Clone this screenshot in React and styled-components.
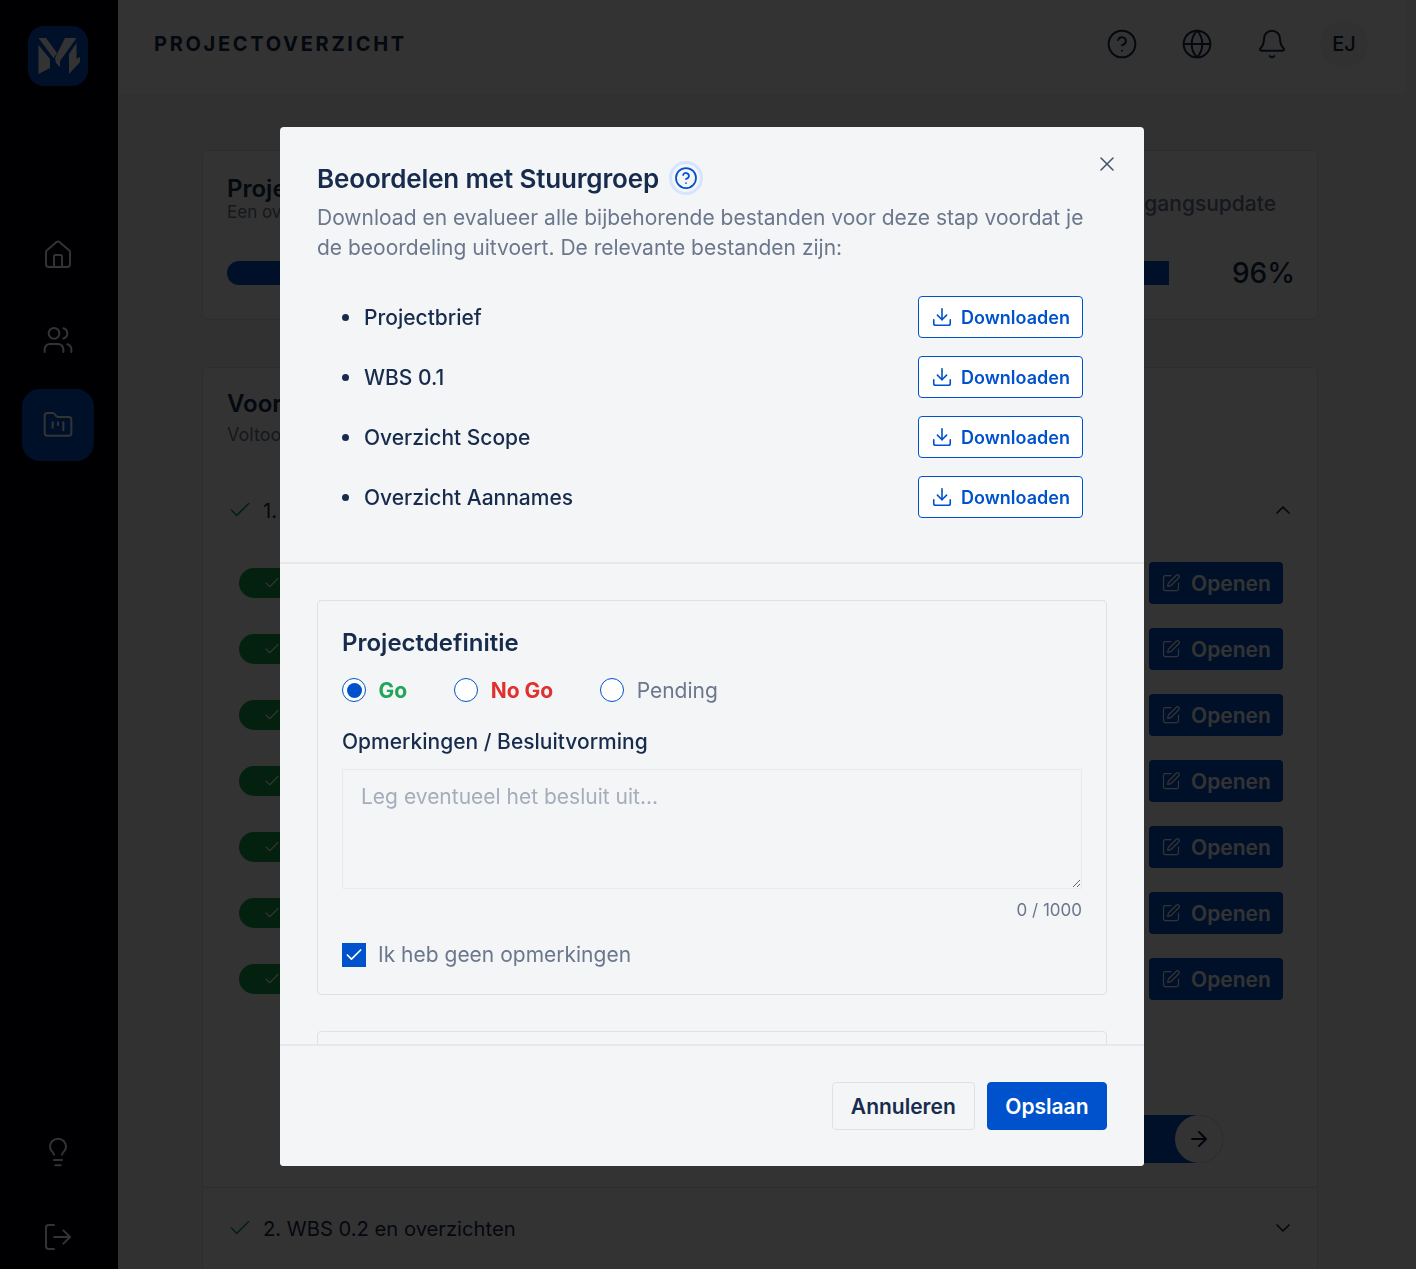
import React from 'react';
import styled, { createGlobalStyle } from 'styled-components';
import {
  ArrowRight,
  Bell,
  Check,
  ChevronDown,
  ChevronUp,
  CircleHelp,
  Download,
  FolderKanban,
  Globe,
  House,
  Lightbulb,
  LogOut,
  SquarePen,
  Users,
  X,
} from 'lucide-react';

const GlobalStyle = createGlobalStyle`
  * { box-sizing: border-box; }
  html, body { margin: 0; height: 100%; overflow: hidden; }
  body {
    font-family: Inter, "Noto Sans", sans-serif;
    color: #172b4d;
    background: #f4f5f7;
  }
`;

const Page = styled.div`
  display: flex;
  height: 100vh;
  overflow: hidden;
`;

const Sidebar = styled.aside`
  flex: 0 0 118px;
  display: flex;
  flex-direction: column;
  align-items: center;
  padding: 26px 2px 0 0;
  background: #02020c;
  color: #fff;
`;

const LogoBox = styled.div`
  width: 60px;
  height: 60px;
  border-radius: 16px;
  background: #0052cc;
  margin-bottom: 133px;
  svg { display: block; }
`;

const NavItem = styled.div`
  width: 72px;
  height: 72px;
  flex-shrink: 0;
  display: flex;
  align-items: center;
  justify-content: center;
  border-radius: 18px;
  margin-bottom: ${(p) => p.$gap || 13}px;
  background: ${(p) => (p.$active ? '#0052cc' : 'transparent')};
`;

const Spacer = styled.div`
  flex: 1;
`;

const Main = styled.main`
  flex: 1;
  min-width: 0;
  display: flex;
  flex-direction: column;
`;

const TopBar = styled.header`
  height: 94px;
  margin-right: 10px;
  padding: 0 36px 6px;
  display: flex;
  align-items: center;
  background: #fff;
  border-radius: 0 0 6px 0;
  flex-shrink: 0;
`;

const PageTitle = styled.h1`
  margin: 0;
  flex: 1;
  font-size: 20px;
  font-weight: 700;
  letter-spacing: 2.7px;
  color: #172b4d;
`;

const TopIcons = styled.div`
  display: flex;
  align-items: center;
  gap: 43px;
  color: #172b4d;
  svg { display: block; }
`;

const Avatar = styled.div`
  width: 48px;
  height: 48px;
  margin-left: -11px;
  margin-right: 2px;
  border-radius: 50%;
  background: #f4f5f7;
  display: flex;
  align-items: center;
  justify-content: center;
  font-size: 20px;
  font-weight: 500;
`;

const Content = styled.div`
  padding: 56px 98px 0 85px;
  display: flex;
  flex-direction: column;
`;

const Card = styled.section`
  background: #fff;
  border: 1px solid #dfe1e6;
  border-radius: 6px;
`;

const ProgressCard = styled(Card)`
  height: 170px;
  margin-left: -1px;
  padding: 24px 22px 24px 24px;
  margin-bottom: 47px;
`;

const CardHead = styled.div`
  display: flex;
  justify-content: space-between;
  align-items: flex-start;
  height: 81px;
`;

const CardTitle = styled.h2`
  margin: 0;
  font-size: 24px;
  line-height: 28px;
  font-weight: 600;
`;

const CardSub = styled.p`
  margin: 0;
  font-size: 17px;
  line-height: 18px;
  color: #6b778c;
`;

const UpdateLink = styled.span`
  margin-top: 16px;
  margin-right: 19px;
  font-size: 21px;
  font-weight: 500;
  color: #6b778c;
`;

const ProgressRow = styled.div`
  display: flex;
  align-items: center;
  justify-content: space-between;
`;

const Track = styled.div`
  width: 942px;
  height: 24px;
  border-radius: 12px 0 0 12px;
  background: #0052cc;
`;

const Percent = styled.span`
  font-size: 28px;
  font-weight: 500;
`;

const StepsCard = styled(Card)`
  margin-left: -1px;
  padding: 22px 0 80px;
`;

const StepsHead = styled.div`
  padding: 0 24px 51px;
`;

const StepsSub = styled(CardSub)`
  margin-top: 6px;
  font-size: 18px;
  line-height: 22px;
`;

const AccordionRow = styled.div`
  display: flex;
  align-items: center;
  gap: 10px;
  padding: 0 22px 0 24px;
  font-size: 20.2px;
  color: #172b4d;
  span { flex: 1; }
  svg { flex-shrink: 0; }
`;

const TaskList = styled.div`
  display: flex;
  flex-direction: column;
  gap: 24px;
  padding: 39px 34px 0 36px;
`;

const TaskRow = styled.div`
  display: flex;
  align-items: center;
  justify-content: space-between;
  height: 42px;
`;

const StatusPill = styled.div`
  width: 120px;
  height: 30px;
  padding-left: 24px;
  display: flex;
  align-items: center;
  border-radius: 15px;
  background: #16a34a;
  color: #fff;
`;

const OpenButton = styled.div`
  width: 134px;
  height: 42px;
  display: flex;
  align-items: center;
  justify-content: center;
  gap: 10px;
  border-radius: 4px;
  background: #0052cc;
  color: #fff;
  font-size: 21px;
  font-weight: 600;
`;

const NextRow = styled.div`
  display: flex;
  justify-content: flex-end;
  padding: 115px 94px 24px 0;
  border-bottom: 1px solid #dfe1e6;
`;

const NextBar = styled.div`
  width: 640px;
  height: 48px;
  display: flex;
  justify-content: flex-end;
  border-radius: 24px;
  background: #0052cc;
`;

const NextCircle = styled.div`
  width: 48px;
  height: 48px;
  border-radius: 50%;
  background: #fff;
  display: flex;
  align-items: center;
  justify-content: center;
  color: #091e42;
`;

const ClosedRow = styled(AccordionRow)`
  padding-top: 27px;
`;

const Overlay = styled.div`
  position: fixed;
  inset: 0;
  padding: 127px 0 0 280px;
  background: rgba(0, 0, 0, 0.8);
`;

const Modal = styled.div`
  position: relative;
  width: 864px;
  height: 1039px;
  display: flex;
  flex-direction: column;
  border-radius: 4px;
  background: #f4f5f7;
  overflow: hidden;
`;

const CloseButton = styled.div`
  position: absolute;
  top: 25px;
  right: 25px;
  color: #42526e;
  svg { display: block; }
`;

const ModalHead = styled.div`
  flex-shrink: 0;
  height: 437px;
  padding: 34px 61px 0 37px;
  border-bottom: 2px solid #e6e8ec;
`;

const TitleRow = styled.div`
  display: flex;
  align-items: center;
  gap: 10px;
  height: 34px;
`;

const ModalTitle = styled.h2`
  margin: 0;
  font-size: 26px;
  font-weight: 600;
  letter-spacing: -0.15px;
  color: #172b4d;
`;

const HelpBadge = styled.div`
  width: 34px;
  height: 34px;
  display: flex;
  align-items: center;
  justify-content: center;
  border-radius: 50%;
  background: #f4f5f7;
  border: 3px solid #d6e4ff;
  color: #0052cc;
  svg { display: block; }
`;

const Description = styled.p`
  margin: 8px -6px 0 0;
  font-size: 21px;
  line-height: 30px;
  color: #6b778c;
`;

const FileList = styled.ul`
  margin: 33px 0 0;
  padding: 0;
  list-style: none;
  display: flex;
  flex-direction: column;
  gap: 18px;
`;

const FileItem = styled.li`
  display: flex;
  align-items: center;
  justify-content: space-between;
  height: 42px;
  padding-left: 25px;
  font-size: 21px;
  font-weight: 500;
`;

const FileName = styled.span`
  display: flex;
  align-items: center;
  gap: 15px;
  &::before {
    content: '';
    width: 7px;
    height: 7px;
    border-radius: 50%;
    background: #172b4d;
  }
`;

const DownloadButton = styled.div`
  width: 165px;
  height: 42px;
  display: flex;
  align-items: center;
  justify-content: center;
  gap: 8px;
  border: 1px solid #0052cc;
  border-radius: 4px;
  background: #fff;
  color: #0052cc;
  font-size: 18px;
  font-weight: 600;
`;

const ModalBody = styled.div`
  flex: 1;
  min-height: 0;
  overflow: hidden;
  padding: 36px 37px 0;
  display: flex;
  flex-direction: column;
  gap: 36px;
`;

const DecisionCard = styled.div`
  flex-shrink: 0;
  height: 395px;
  padding: 24px;
  border: 1px solid #dfe1e6;
  border-radius: 4px;
`;

const DecisionTitle = styled.h3`
  margin: 0;
  font-size: 24px;
  line-height: 36px;
  font-weight: 600;
`;

const RadioGroup = styled.div`
  display: flex;
  gap: 47px;
  margin-top: 13px;
`;

const RadioOption = styled.label`
  display: flex;
  align-items: center;
  gap: 12.5px;
  height: 32px;
  font-size: 21px;
  font-weight: ${(p) => (p.$color ? 700 : 400)};
  color: ${(p) => p.$color || '#6b778c'};
`;

const RadioDot = styled.span`
  width: 24px;
  height: 24px;
  display: flex;
  align-items: center;
  justify-content: center;
  border-radius: 50%;
  border: 1px solid #0052cc;
  background: #fff;
  &::after {
    content: '';
    width: 15px;
    height: 15px;
    border-radius: 50%;
    background: ${(p) => (p.$checked ? '#0052cc' : 'transparent')};
  }
`;

const FieldLabel = styled.div`
  margin-top: 21px;
  font-size: 21px;
  line-height: 30px;
  font-weight: 500;
`;

const Notes = styled.textarea`
  display: block;
  width: 100%;
  height: 120px;
  margin-top: 12px;
  padding: 13px 18px;
  border: 1px solid #e8eaed;
  border-radius: 2px;
  outline: none;
  background: transparent;
  font-family: inherit;
  font-size: 21px;
  line-height: 28px;
  &::placeholder { color: #a5adba; }
`;

const Counter = styled.div`
  margin-top: 10px;
  text-align: right;
  font-size: 17px;
  line-height: 22px;
  color: #6b778c;
`;

const NoRemarks = styled.label`
  display: flex;
  align-items: center;
  gap: 12px;
  margin-top: 21px;
  font-size: 21px;
  color: #6b778c;
`;

const CheckBox = styled.span`
  width: 24px;
  height: 24px;
  display: flex;
  align-items: center;
  justify-content: center;
  background: #0052cc;
  color: #fff;
`;

const ModalFooter = styled.div`
  flex-shrink: 0;
  height: 122px;
  padding: 36px 37px 0;
  display: flex;
  justify-content: flex-end;
  gap: 12px;
  border-top: 2px solid #e6e8ec;
  background: #f4f5f7;
`;

const FooterButton = styled.div`
  height: 48px;
  padding: 0 ${(p) => (p.$primary ? 17.5 : 18)}px;
  display: flex;
  align-items: center;
  border-radius: 4px;
  border: 1px solid ${(p) => (p.$primary ? '#0052cc' : '#dfe1e6')};
  background: ${(p) => (p.$primary ? '#0052cc' : 'transparent')};
  color: ${(p) => (p.$primary ? '#fff' : '#172b4d')};
  font-size: 21px;
  font-weight: 600;
`;

const files = ['Projectbrief', 'WBS 0.1', 'Overzicht Scope', 'Overzicht Aannames'];
const tasks = [0, 1, 2, 3, 4, 5, 6];

const LogoMark = () => (
  <svg width="60" height="60" viewBox="0 0 60 60" fill="#fff">
    <polygon points="10.5,19 22,33 22,42 10.5,48" />
    <polygon points="10.5,12 18,12 29,27 25.5,32" />
    <polygon points="37,12 48.5,12 32,35 32,41 28,37 27,32" />
    <polygon points="48.5,17 48.5,33 52,31 52,36 41,48 41,28" />
  </svg>
);

const App = () => (
  <>
    <GlobalStyle />
    <Page>
      <Sidebar>
        <LogoBox>
          <LogoMark />
        </LogoBox>
        <NavItem>
          <House size={32} strokeWidth={1.5} />
        </NavItem>
        <NavItem>
          <Users size={32} strokeWidth={1.5} />
        </NavItem>
        <NavItem $active>
          <FolderKanban size={32} strokeWidth={1.5} />
        </NavItem>
        <Spacer />
        <NavItem>
          <Lightbulb size={32} strokeWidth={1.5} />
        </NavItem>
        <NavItem $gap={-4}>
          <LogOut size={32} strokeWidth={1.5} />
        </NavItem>
      </Sidebar>
      <Main>
        <TopBar>
          <PageTitle>PROJECTOVERZICHT</PageTitle>
          <TopIcons>
            <CircleHelp size={32} strokeWidth={1.5} />
            <Globe size={32} strokeWidth={1.5} />
            <Bell size={32} strokeWidth={1.5} />
            <Avatar>EJ</Avatar>
          </TopIcons>
        </TopBar>
        <Content>
          <ProgressCard>
            <CardHead>
              <div>
                <CardTitle>Projectvoortgang</CardTitle>
                <CardSub>Een overzicht van de voortgang</CardSub>
              </div>
              <UpdateLink>Voortgangsupdate</UpdateLink>
            </CardHead>
            <ProgressRow>
              <Track />
              <Percent>96%</Percent>
            </ProgressRow>
          </ProgressCard>
          <StepsCard>
            <StepsHead>
              <CardTitle>Voorbereiding</CardTitle>
              <StepsSub>Voltooi alle stappen</StepsSub>
            </StepsHead>
            <AccordionRow>
              <Check size={26} strokeWidth={1.5} color="#16a34a" />
              <span>1. Projectdefinitie</span>
              <ChevronUp size={24} strokeWidth={1.75} />
            </AccordionRow>
            <TaskList>
              {tasks.map((t) => (
                <TaskRow key={t}>
                  <StatusPill>
                    <Check size={18} strokeWidth={1.5} />
                  </StatusPill>
                  <OpenButton>
                    <SquarePen size={20} strokeWidth={1.5} />
                    Openen
                  </OpenButton>
                </TaskRow>
              ))}
            </TaskList>
            <NextRow>
              <NextBar>
                <NextCircle>
                  <ArrowRight size={24} strokeWidth={2} />
                </NextCircle>
              </NextBar>
            </NextRow>
            <ClosedRow>
              <Check size={26} strokeWidth={1.5} color="#16a34a" />
              <span>2. WBS 0.2 en overzichten</span>
              <ChevronDown size={24} strokeWidth={1.75} />
            </ClosedRow>
          </StepsCard>
        </Content>
      </Main>
    </Page>
    <Overlay>
      <Modal>
        <CloseButton>
          <X size={24} strokeWidth={1.5} />
        </CloseButton>
        <ModalHead>
          <TitleRow>
            <ModalTitle>Beoordelen met Stuurgroep</ModalTitle>
            <HelpBadge>
              <CircleHelp size={24} strokeWidth={1.75} />
            </HelpBadge>
          </TitleRow>
          <Description>
            Download en evalueer alle bijbehorende bestanden voor deze stap voordat je de beoordeling uitvoert. De
            relevante bestanden zijn:
          </Description>
          <FileList>
            {files.map((file) => (
              <FileItem key={file}>
                <FileName>{file}</FileName>
                <DownloadButton>
                  <Download size={22} strokeWidth={1.75} />
                  Downloaden
                </DownloadButton>
              </FileItem>
            ))}
          </FileList>
        </ModalHead>
        <ModalBody>
          <DecisionCard>
            <DecisionTitle>Projectdefinitie</DecisionTitle>
            <RadioGroup>
              <RadioOption $color="#22a559">
                <RadioDot $checked />
                Go
              </RadioOption>
              <RadioOption $color="#e03131">
                <RadioDot />
                No Go
              </RadioOption>
              <RadioOption>
                <RadioDot />
                Pending
              </RadioOption>
            </RadioGroup>
            <FieldLabel>Opmerkingen / Besluitvorming</FieldLabel>
            <Notes readOnly placeholder="Leg eventueel het besluit uit..." />
            <Counter>0 / 1000</Counter>
            <NoRemarks>
              <CheckBox>
                <Check size={20} strokeWidth={2} />
              </CheckBox>
              Ik heb geen opmerkingen
            </NoRemarks>
          </DecisionCard>
          <DecisionCard />
        </ModalBody>
        <ModalFooter>
          <FooterButton>Annuleren</FooterButton>
          <FooterButton $primary>Opslaan</FooterButton>
        </ModalFooter>
      </Modal>
    </Overlay>
  </>
);

export default App;
